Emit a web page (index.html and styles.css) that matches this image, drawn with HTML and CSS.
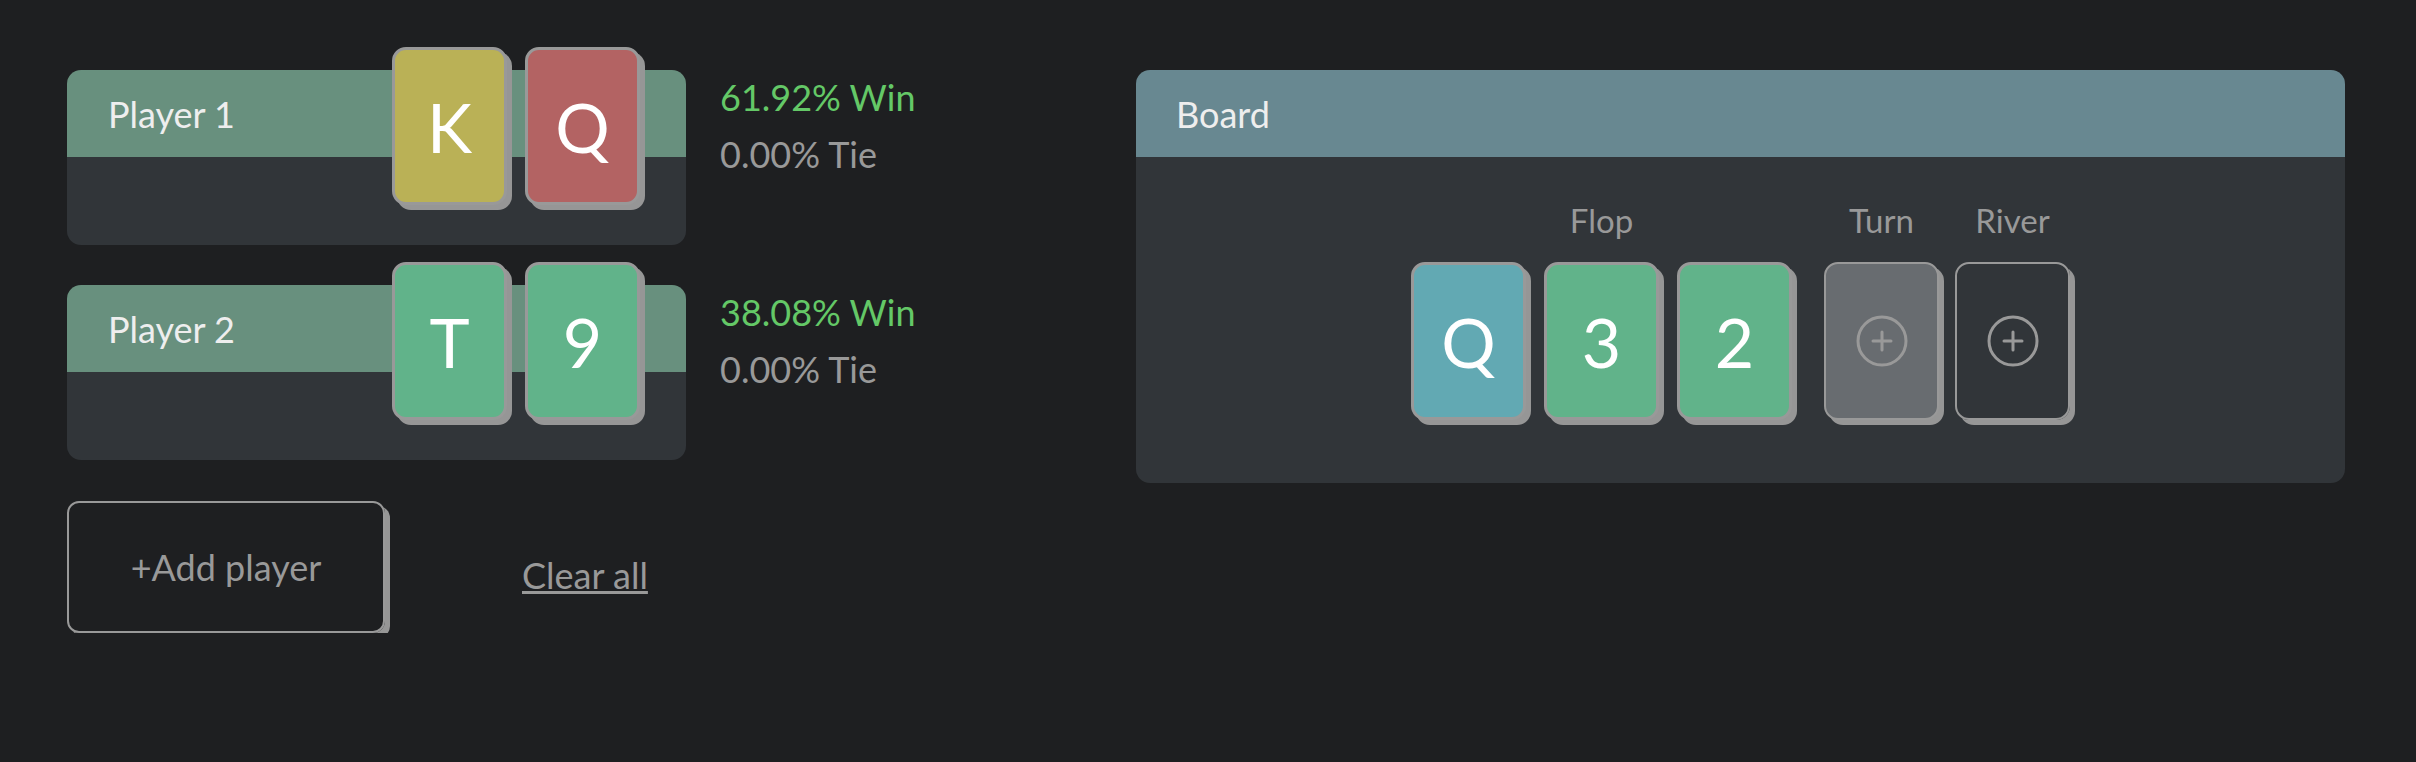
FILE: index.html
```html
<!DOCTYPE html>
<html lang="en">
<head>
    <meta charset="UTF-8">
    <meta name="viewport" content="width=device-width, initial-scale=1.0">
    <title>Poker Odds</title>
    <link rel="stylesheet" href="styles.css">
</head>
<body>
    <main class="page">
        <div class="left">
            <div class="players">
                <div class="player-row">
                    <div class="player">
                        <div class="player-head">
                            <span class="player-name">Player 1</span>
                            <div class="hand">
                                <div class="card yellow">K</div>
                                <div class="card red">Q</div>
                            </div>
                        </div>
                        <div class="player-body"></div>
                    </div>
                    <div class="stats">
                        <div class="win">61.92% Win</div>
                        <div class="tie">0.00% Tie</div>
                    </div>
                </div>
                <div class="player-row">
                    <div class="player">
                        <div class="player-head">
                            <span class="player-name">Player 2</span>
                            <div class="hand">
                                <div class="card green">T</div>
                                <div class="card green">9</div>
                            </div>
                        </div>
                        <div class="player-body"></div>
                    </div>
                    <div class="stats">
                        <div class="win">38.08% Win</div>
                        <div class="tie">0.00% Tie</div>
                    </div>
                </div>
            </div>
            <div class="actions">
                <button class="add-player">+Add player</button>
                <a href="#" class="clear-all">Clear all</a>
            </div>
        </div>

        <section class="board">
            <div class="board-head">Board</div>
            <div class="board-body">
                <div class="street flop">
                    <div class="street-label">Flop</div>
                    <div class="street-cards">
                        <div class="card teal">Q</div>
                        <div class="card green">3</div>
                        <div class="card green">2</div>
                    </div>
                </div>
                <div class="street">
                    <div class="street-label">Turn</div>
                    <div class="street-cards">
                        <div class="card empty selected">
                            <svg width="54" height="54" viewBox="0 0 54 54"><circle cx="27" cy="27" r="24" fill="none" stroke="#999" stroke-width="3"/><path d="M27 18v18M18 27h18" stroke="#999" stroke-width="3" stroke-linecap="round"/></svg>
                        </div>
                    </div>
                </div>
                <div class="street">
                    <div class="street-label">River</div>
                    <div class="street-cards">
                        <div class="card empty">
                            <svg width="54" height="54" viewBox="0 0 54 54"><circle cx="27" cy="27" r="24" fill="none" stroke="#999" stroke-width="3"/><path d="M27 18v18M18 27h18" stroke="#999" stroke-width="3" stroke-linecap="round"/></svg>
                        </div>
                    </div>
                </div>
            </div>
        </section>
    </main>
</body>
</html>
```

FILE: styles.css
```css
body {
    font-family: Lato, "Open Sans", sans-serif;
    margin: 0;
    padding: 0;
    background-color: #1e1f21;
    color: #999999;
}
.page {
    display: grid;
    grid-template-columns: 1069px 1209px;
    padding: 47px 0 0 67px;
}
.players {
    display: flex;
    flex-direction: column;
    gap: 17px;
}
.player-row {
    display: flex;
    align-items: flex-start;
    gap: 34px;
}
.player {
    width: 619px;
    margin-top: 23px;
}
.player-head {
    display: flex;
    align-items: flex-start;
    height: 87px;
    background-color: #68907e;
    border-radius: 14px 14px 0 0;
}
.player-name {
    align-self: center;
    padding-left: 41px;
    font-size: 36px;
    color: #eeeeee;
}
.player-body {
    height: 88px;
    background-color: #313539;
    border-radius: 0 0 14px 14px;
}
.hand {
    display: flex;
    gap: 18px;
    margin: -23px 46px 0 auto;
}
.card {
    z-index: 1;
    box-sizing: border-box;
    width: 115px;
    height: 158px;
    display: flex;
    align-items: center;
    justify-content: center;
    border: 3px solid #999999;
    border-radius: 14px;
    box-shadow: 5px 5px 0 #969696;
    font-size: 68px;
    color: #ffffff;
}
.yellow { background-color: #bab156; }
.red { background-color: #b36363; }
.green { background-color: #61b38a; }
.teal { background-color: #62a9b3; }
.card.empty {
    border-width: 2px;
    background-color: transparent;
}
.card.selected {
    background-color: #686c70;
}
.stats {
    margin-top: 22px;
    font-size: 36px;
    line-height: 57px;
}
.win {
    color: #64c867;
}
.tie {
    color: #999999;
}
.actions {
    display: flex;
    align-items: center;
    gap: 137px;
    margin-top: 41px;
}
.add-player {
    width: 318px;
    height: 132px;
    background: transparent;
    border: 2px solid #999999;
    border-radius: 12px;
    box-shadow: 5px 5px 0 #969696;
    font-family: inherit;
    font-size: 36px;
    color: #999999;
    cursor: pointer;
}
.clear-all {
    margin-top: 16px;
    font-size: 36px;
    color: #999999;
}
.board {
    margin-top: 23px;
}
.board-head {
    display: flex;
    align-items: center;
    height: 87px;
    padding-left: 40px;
    background-color: #688891;
    border-radius: 14px 14px 0 0;
    font-size: 36px;
    color: #eeeeee;
}
.board-body {
    display: flex;
    justify-content: center;
    align-items: flex-start;
    gap: 16px;
    padding: 43px 0 63px;
    background-color: #313539;
    border-radius: 0 0 14px 14px;
}
.street {
    display: flex;
    flex-direction: column;
    align-items: center;
}
.street.flop {
    margin-right: 16px;
}
.street-label {
    font-size: 33px;
    margin-bottom: 22px;
}
.street-cards {
    display: flex;
    gap: 18px;
}
```
